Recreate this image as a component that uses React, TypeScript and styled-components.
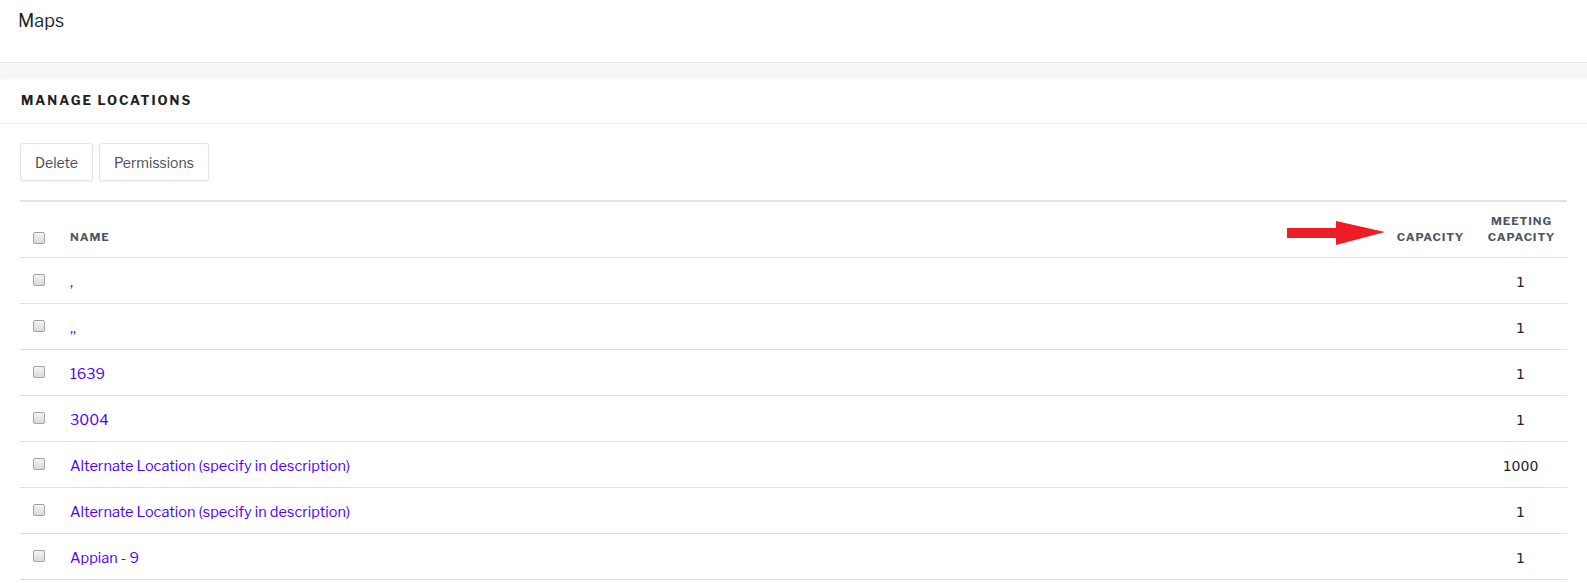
import React from "react";
import styled, { createGlobalStyle } from "styled-components";

const Global = createGlobalStyle`
  html, body { margin: 0; padding: 0; background: #ffffff; }
  body { font-family: "Libre Franklin", "Open Sans", "Liberation Sans", sans-serif; color: #222; }
`;

const Page = styled.div`
  width: 1587px;
  min-height: 583px;
  background: #f6f7f9;
  display: flex;
  flex-direction: column;
`;

const TopBar = styled.header`
  height: 63px;
  background: #fff;
  border-bottom: 1px solid #e6e8eb;
  padding: 10px 0 0 18px;
  box-sizing: border-box;
  font-size: 18px;
  color: #1b1f24;
`;

const Card = styled.section`
  margin-top: 16px;
  background: #fff;
  border-radius: 4px 0 0 0;
  flex: 1;
`;

const CardTitle = styled.h2`
  margin: 0;
  height: 45px;
  box-sizing: border-box;
  padding: 13px 0 0 21px;
  font-size: 13px;
  font-weight: 700;
  letter-spacing: 2px;
  color: #1d1f24;
  border-bottom: 1px solid #eef0f4;
`;

const Body = styled.div`
  padding: 19px 20px 0 20px;
`;

const Toolbar = styled.div`
  display: flex;
  gap: 6px;
  margin-bottom: 19px;
`;

const Button = styled.button`
  height: 38px;
  padding: 0 14px;
  background: #fff;
  border: 1px solid #e2e4e7;
  border-radius: 3px;
  box-shadow: 0 1px 2px rgba(0,0,0,0.05);
  font-family: inherit;
  font-size: 14px;
  color: #4a4d55;
  cursor: pointer;
`;

const Table = styled.table`
  width: 1547px;
  border-collapse: collapse;
  table-layout: fixed;
  border-top: 2px solid #e3e3e3;
`;

const Th = styled.th<{ $align?: string; $pr?: number }>`
  height: 43px;
  vertical-align: bottom;
  padding: 0 ${(p) => p.$pr || 0}px 12px 0;
  text-align: ${(p) => p.$align || "left"};
  font-size: 11.5px;
  font-weight: 700;
  letter-spacing: 0.9px;
  color: #4e5560;
  border-bottom: 1px solid #e0e0e0;
  line-height: 16px;
`;

const Td = styled.td<{ $align?: string }>`
  height: 45px;
  padding: 0;
  text-align: ${(p) => p.$align || "left"};
  border-bottom: 1px solid #e0e0e0;
  font-size: 14px;
  color: #1d2433;
`;

const CheckCell = styled.div<{ $head?: boolean }>`
  display: flex;
  align-items: center;
  padding-left: 13px;
  position: relative;
  top: ${(p) => (p.$head ? "-1px" : "-1px")};
`;

const Check = styled.input.attrs({ type: "checkbox" })`
  appearance: none;
  margin: 0;
  width: 12px;
  height: 12px;
  border: 1px solid #a3a3a3;
  border-radius: 2px;
  background: linear-gradient(#f4f4f4, #dadada);
`;

const NameLink = styled.a`
  color: #5000ff;
  text-decoration: none;
  font-size: 14.5px;
  position: relative;
  top: 1px;
`;

const Num = styled.span`
  font-family: "DejaVu Sans", Verdana, sans-serif;
  font-size: 14px;
  color: #1a2130;
  position: relative;
  top: 1px;
  left: -1px;
`;

const ArrowWrap = styled.div`
  position: absolute;
  right: 91px;
  bottom: 11px;
  display: flex;
`;

const rows: { name: string; meeting: string }[] = [
  { name: ",", meeting: "1" },
  { name: ",,", meeting: "1" },
  { name: "1639", meeting: "1" },
  { name: "3004", meeting: "1" },
  { name: "Alternate Location (specify in description)", meeting: "1000" },
  { name: "Alternate Location (specify in description)", meeting: "1" },
  { name: "Appian - 9", meeting: "1" },
];

const Arrow = () => (
  <svg width="98" height="25" viewBox="0 0 98 25">
    <rect x="0" y="7" width="52" height="10" fill="#ee1c25" />
    <polygon points="49,0 98,11 49,24" fill="#ee1c25" />
  </svg>
);

export default function App() {
  return (
    <>
      <Global />
      <Page>
        <TopBar>Maps</TopBar>
        <Card>
          <CardTitle>MANAGE LOCATIONS</CardTitle>
          <Body>
            <Toolbar>
              <Button>Delete</Button>
              <Button>Permissions</Button>
            </Toolbar>
            <Table>
              <colgroup>
                <col style={{ width: 50 }} />
                <col />
                <col style={{ width: 110 }} />
                <col style={{ width: 91 }} />
              </colgroup>
              <thead>
                <tr>
                  <Th>
                    <CheckCell $head>
                      <Check />
                    </CheckCell>
                  </Th>
                  <Th>NAME</Th>
                  <Th $align="right" $pr={12} style={{ position: "relative" }}>
                    CAPACITY
                    <ArrowWrap>
                      <Arrow />
                    </ArrowWrap>
                  </Th>
                  <Th $align="center">
                    MEETING
                    <br />
                    CAPACITY
                  </Th>
                </tr>
              </thead>
              <tbody>
                {rows.map((r, i) => (
                  <tr key={i}>
                    <Td>
                      <CheckCell>
                        <Check />
                      </CheckCell>
                    </Td>
                    <Td>
                      <NameLink href="#">{r.name}</NameLink>
                    </Td>
                    <Td />
                    <Td $align="center">
                      <Num>{r.meeting}</Num>
                    </Td>
                  </tr>
                ))}
              </tbody>
            </Table>
          </Body>
        </Card>
      </Page>
    </>
  );
}
